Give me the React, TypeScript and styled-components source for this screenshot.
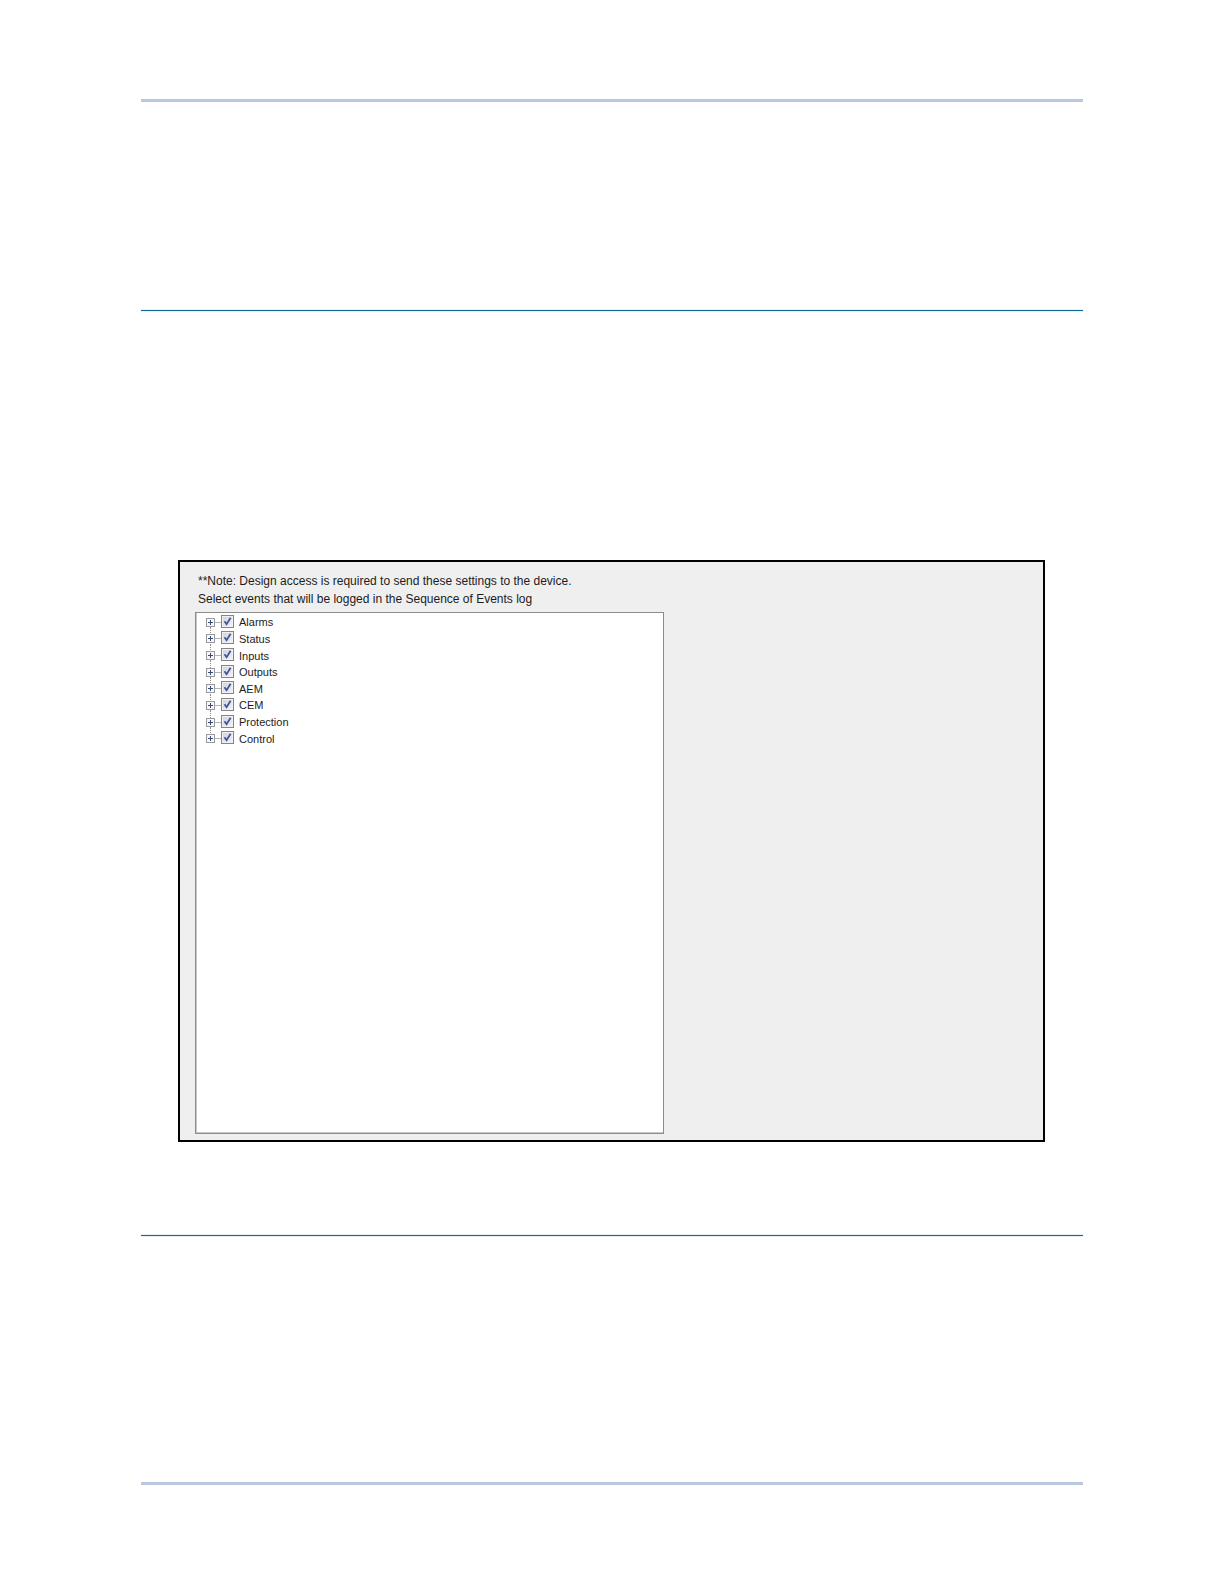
import React, { useState } from "react";
import styled, { createGlobalStyle } from "styled-components";

const GlobalStyle = createGlobalStyle`
  * { box-sizing: border-box; }
  body {
    margin: 0;
    background: #ffffff;
    color: #1c1c1c;
    font-family: "Liberation Sans", Arial, sans-serif;
    font-size: 11px;
  }
`;

const Page = styled.main`
  max-width: 942px;
  margin: 0 auto;
  padding: 99px 0;
`;

const PageRule = styled.hr`
  height: 3px;
  margin: 0;
  border: 0;
  background: #b9c8de;
`;

const SectionRule = styled.hr`
  height: 1px;
  margin: 0;
  border: 0;
  background: #0f6a94;
  box-shadow: 0 0 1px #0f6a94;
`;

const Spacer = styled.div<{ $height: number }>`
  height: ${(p) => p.$height}px;
`;

const Panel = styled.section`
  margin: 249px 38px 93px 37px;
  padding: 10px 15px 6px;
  border: 2px solid #000000;
  background: #efefef;
`;

const Note = styled.p`
  margin: 0;
  padding-left: 3px;
  font-size: 12px;
  line-height: 18px;
`;

const TreeBox = styled.div`
  max-width: 469px;
  min-height: 522px;
  margin-top: 4px;
  padding: 0 9px;
  border: 1px solid #8c8c8c;
  background: #ffffff;
  box-shadow: inset 1px -1px 0 #c8c8c8;
`;

const Tree = styled.ul`
  display: grid;
  grid-auto-rows: 1fr;
  height: 133px;
  margin: 0;
  padding: 0;
  list-style: none;
`;

const Row = styled.li`
  position: relative;
  display: flex;
  align-items: center;

  &:not(:last-child)::after {
    content: "";
    position: absolute;
    left: 5px;
    top: 14px;
    height: 8px;
    border-left: 1px dotted #8f8f8f;
  }
`;

const Expander = styled.button`
  display: flex;
  width: 9px;
  height: 9px;
  margin: 2px 0 0 1px;
  padding: 0;
  border: 1px solid #9a9a9a;
  background: #f7f7f7;
`;

const Connector = styled.span`
  width: 6px;
  margin-top: 2px;
  border-top: 1px solid #b4b4b4;
`;

const CheckLabel = styled.label`
  display: flex;
  align-items: center;
  gap: 5px;
`;

const CheckBox = styled.span`
  display: grid;
  width: 13px;
  height: 13px;

  > * { grid-area: 1 / 1; }
  svg { pointer-events: none; }
`;

const CheckInput = styled.input`
  appearance: none;
  width: 13px;
  height: 13px;
  margin: 0;
  border: 1px solid #858585;
  background: linear-gradient(135deg, #cdd2da, #f3f4f6);
  box-shadow: inset 0 0 0 1px #f1f1f1;
`;

const LabelText = styled.span`
  padding-top: 2px;
  line-height: 14px;
`;

const groups = ["Alarms", "Status", "Inputs", "Outputs", "AEM", "CEM", "Protection", "Control"];

function EventGroup({ name }: { name: string }) {
  const [checked, setChecked] = useState(true);
  return (
    <Row>
      <Expander type="button" aria-label={`Expand ${name}`}>
        <svg width="7" height="7" viewBox="0 0 7 7" aria-hidden="true">
          <path d="M1 3.5H6M3.5 1V6" stroke="#3c4a78" strokeWidth="1" />
        </svg>
      </Expander>
      <Connector />
      <CheckLabel>
        <CheckBox>
          <CheckInput type="checkbox" checked={checked} onChange={(e) => setChecked(e.target.checked)} />
          {checked && (
            <svg width="13" height="13" viewBox="0 0 13 13" aria-hidden="true">
              <path d="M3.5 6.2L5.6 9.2L9.6 2.8" fill="none" stroke="#40559b" strokeWidth="1.8" />
            </svg>
          )}
        </CheckBox>
        <LabelText>{name}</LabelText>
      </CheckLabel>
    </Row>
  );
}

export default function App() {
  return (
    <>
      <GlobalStyle />
      <Page>
        <PageRule />
        <Spacer $height={208} />
        <SectionRule />
        <Panel>
          <Note>**Note: Design access is required to send these settings to the device.</Note>
          <Note>Select events that will be logged in the Sequence of Events log</Note>
          <TreeBox>
            <Tree>
              {groups.map((name) => (
                <EventGroup key={name} name={name} />
              ))}
            </Tree>
          </TreeBox>
        </Panel>
        <SectionRule />
        <Spacer $height={246} />
        <PageRule />
      </Page>
    </>
  );
}
